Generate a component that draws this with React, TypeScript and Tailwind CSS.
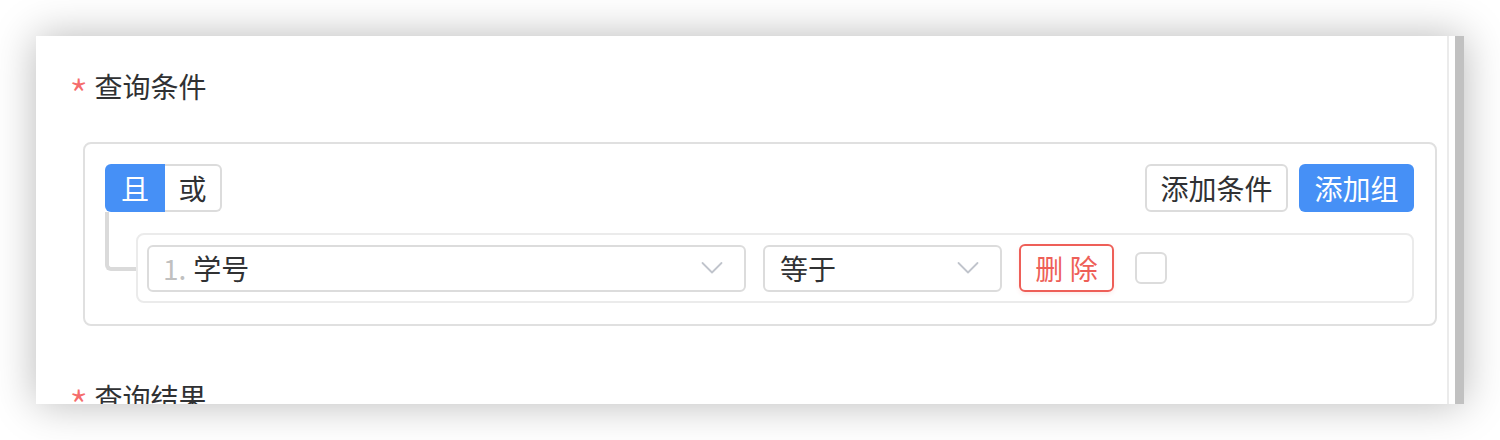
import React, { useState } from 'react';

const FONT = { fontFamily: '"Noto Sans CJK SC", "Noto Sans", sans-serif' };

const Chevron: React.FC = () => (
    <svg width="22" height="14" viewBox="0 0 22 14" fill="none" className="shrink-0">
        <path d="M1.5 2 L11 11.5 L20.5 2" stroke="#c0c4cc" strokeWidth="1.8" strokeLinecap="round" strokeLinejoin="round" />
    </svg>
);

const Title: React.FC<{ text: string }> = ({ text }) => (
    <div className="flex items-center h-[40px] pl-[36px] text-[28px] leading-[40px] text-[#303133]">
        <span className="text-[#f56c6c] text-[44px] font-light leading-[40px] -ml-[3px] mr-[6px] translate-y-[8px]">*</span>
        <span>{text}</span>
    </div>
);

export default function App() {
    const [mode, setMode] = useState<'and' | 'or'>('and');
    const [checked, setChecked] = useState(false);

    return (
        <div className="w-full h-[440px] bg-white pt-[36px] pl-[36px] overflow-hidden" style={FONT}>
            <div className="w-[1428px] h-[368px] bg-white flex shadow-[0_0_40px_rgba(0,0,0,0.28)] overflow-hidden">
                {/* content */}
                <div className="flex-1 pt-[30px]">
                    <Title text="查询条件" />

                    {/* condition group */}
                    <div className="ml-[47px] mr-[10px] mt-[36px] border-2 border-[#e0e0e0] rounded-[8px] pt-[20px] pl-[20px] pr-[21px] pb-[21px]">
                        <div className="flex items-center justify-between h-[48px]">
                            <div className="flex h-[48px] text-[28px]">
                                <button
                                    onClick={() => setMode('and')}
                                    className={`w-[60px] h-full flex items-center justify-center rounded-l-[6px] ${mode === 'and' ? 'bg-[#4690f6] text-white' : 'bg-white text-[#303133] border-2 border-r-0 border-[#dcdcdc]'}`}
                                >
                                    且
                                </button>
                                <button
                                    onClick={() => setMode('or')}
                                    className={`w-[57px] h-full flex items-center justify-center rounded-r-[6px] ${mode === 'or' ? 'bg-[#4690f6] text-white' : 'bg-white text-[#303133] border-2 border-l-0 border-[#dcdcdc]'}`}
                                >
                                    或
                                </button>
                            </div>
                            <div className="flex items-center gap-[11px] text-[28px]">
                                <button className="w-[143px] h-[48px] border-2 border-[#dcdcdc] rounded-[6px] bg-white text-[#303133] flex items-center justify-center">
                                    添加条件
                                </button>
                                <button className="w-[115px] h-[48px] rounded-[6px] bg-[#4690f6] text-white flex items-center justify-center">
                                    添加组
                                </button>
                            </div>
                        </div>

                        {/* condition row */}
                        <div className="relative mt-[21px] pl-[31px]">
                            <div className="absolute left-0 top-[-21px] w-[33px] h-[59px] border-l-[4px] border-b-[4px] border-[#dadada] rounded-bl-[6px]" />
                            <div className="relative bg-white border-2 border-[#ebebeb] rounded-[8px] p-[9px] flex items-center text-[28px] text-[#303133]">
                                <div className="w-[599px] h-[47px] border-2 border-[#dcdcdc] rounded-[6px] flex items-center justify-between pl-[14px] pr-[21px]">
                                    <div className="flex items-center">
                                        <span className="text-[#c0c0c0] mr-[7px]">1.</span>
                                        <span>学号</span>
                                    </div>
                                    <Chevron />
                                </div>
                                <div className="ml-[17px] w-[239px] h-[47px] border-2 border-[#dcdcdc] rounded-[6px] flex items-center justify-between pl-[15px] pr-[21px]">
                                    <span>等于</span>
                                    <Chevron />
                                </div>
                                <button className="ml-[17px] w-[95px] h-[48px] border-2 border-[#ee5f58] rounded-[6px] text-[#ee5f58] flex items-center justify-center shadow-[0_2px_4px_rgba(238,95,88,0.12)]">
                                    删 除
                                </button>
                                <button
                                    onClick={() => setChecked(!checked)}
                                    className={`ml-[21px] w-[32px] h-[32px] rounded-[6px] border-2 ${checked ? 'bg-[#4690f6] border-[#4690f6]' : 'bg-white border-[#dcdcdc]'}`}
                                />
                            </div>
                        </div>
                    </div>

                    <div className="mt-[51px]">
                        <Title text="查询结果" />
                    </div>
                </div>

                {/* scrollbar */}
                <div className="w-[17px] h-full flex border-l-2 border-[#ebebeb]">
                    <div className="w-[6px] bg-white" />
                    <div className="w-[9px] bg-[#c1c1c1]" />
                </div>
            </div>
        </div>
    );
}
